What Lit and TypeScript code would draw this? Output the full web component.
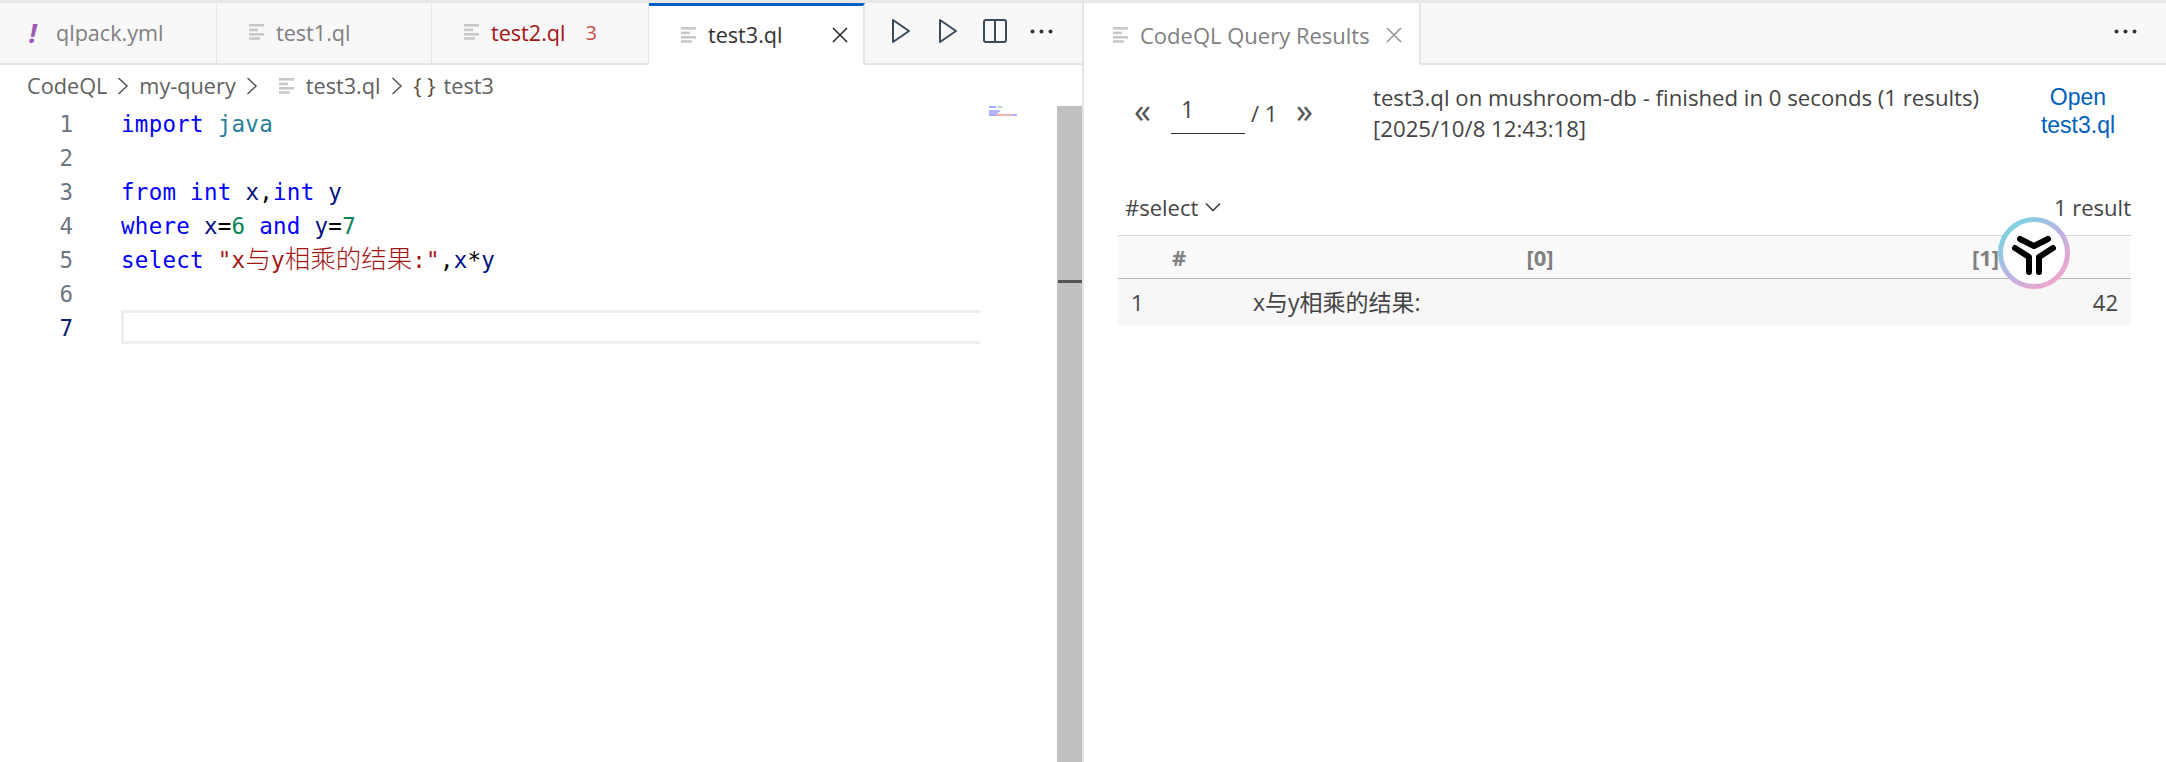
import { LitElement, html, css, svg } from "lit";
import { customElement } from "lit/decorators.js";

const docIcon = html`<svg class="doc" width="16" height="16" viewBox="0 0 16 16"><g fill="#c8c8c8"><rect x="0" y="0" width="15" height="2.6"/><rect x="0" y="4.6" width="9" height="2.6"/><rect x="0" y="9" width="15" height="2.6"/><rect x="0" y="13.2" width="11" height="2.6"/></g></svg>`;
const chev = html`<svg class="chev" width="12" height="20" viewBox="0 0 12 20"><path d="M1.5 2 L10 10 L1.5 18" fill="none" stroke="#555" stroke-width="1.5"/></svg>`;
const closeIcon = (c: string) => html`<svg width="16" height="16" viewBox="0 0 16 16"><path d="M1 1 L15 15 M15 1 L1 15" stroke="${c}" stroke-width="1.7" fill="none"/></svg>`;
const play = html`<svg width="20" height="26" viewBox="0 0 20 26"><path d="M2 2 V24 L18 13 Z" fill="none" stroke="#3b4a5a" stroke-width="2" stroke-linejoin="round"/></svg>`;
const dots = html`<svg width="23" height="5" viewBox="0 0 23 5"><g fill="#333"><circle cx="2.5" cy="2.5" r="2"/><circle cx="11.5" cy="2.5" r="2"/><circle cx="20.5" cy="2.5" r="2"/></g></svg>`;

@customElement("app-root")
export class AppRoot extends LitElement {
  static styles = css`
    :host { display: block; width: 2166px; height: 762px; position: relative; overflow: hidden; background: #fff;
      font-family: "Open Sans", "Noto Sans CJK SC", sans-serif; color: #444; font-size: 22px; }
    .app { display: flex; height: 762px; box-sizing: border-box; }
    .left { width: 1082px; display: flex; flex-direction: column; flex: none; }
    .divider { width: 2px; background: #e5e5e5; flex: none; }
    .right { flex: 1; display: flex; flex-direction: column; min-width: 0; }
    .tabs { height: 65px; box-sizing: border-box; display: flex; flex: none; background: #f8f8f8;
      border-top: 3px solid #e8e8e8; border-bottom: 2px solid #e5e5e5; font-size: 21.6px; }
    .tab { display: flex; align-items: center; flex: none; box-sizing: border-box; border-right: 1px solid #e5e5e5; color: #808080; height: 60px; padding-bottom: 2px; }
    .t1 { width: 217px; padding-left: 29px; }
    .t2 { width: 215px; padding-left: 32px; }
    .t3 { width: 217px; padding-left: 32px; }
    .t4 { width: 216px; padding-left: 32px; margin-bottom: -2px; height: 62px; background: #fff; border-top: 3px solid #0060c0; color: #333; border-right: 2px solid #e5e5e5; margin-top: 0; }
    .t5 { width: 337px; padding-left: 29px; background: #fff; height: 62px; color: #808080; border-right: 2px solid #e5e5e5; padding-top: 3px; font-size: 22px; }
    .doc { flex: none; margin-right: 11px; }
    .bang { color: #9b59b6; font-weight: 700; font-style: italic; font-size: 27px; width: 27px; flex: none; }
    .err { color: #a31515; }
    .count { color: #c74e4e; margin-left: 20px; font-size: 20px; }
    .x { margin-left: 49px; display: flex; }
    .t5 .x { margin-left: 16px; }
    .actions { display: flex; align-items: center; flex: 1; padding-left: 26px; padding-bottom: 4px; }
    .actions svg { flex: none; }
    .a2 { margin-left: 27px; }
    .a3 { margin-left: 25px; }
    .a4 { margin-left: 23px; }
    .rightfill { flex: 1; display: flex; align-items: center; justify-content: flex-end; padding: 0 29px 4px 0; }
    .crumbs { height: 41px; flex: none; display: flex; align-items: center; color: #616161; padding-left: 27px; box-sizing: border-box; font-size: 21.7px; }
    .chev { flex: none; margin: 0 10px 0 10px; }
    .crumbs .doc { margin: 0 11px 0 11px; }
    .crumbs .brace { color: #5a4a3a; margin-left: 1px; margin-right: 8px; }
    .editor { flex: 1; display: flex; min-height: 0; }
    .gutter { width: 121px; flex: none; box-sizing: border-box; padding-right: 48px; text-align: right; color: #6e7681; }
    .gutter div, .line { height: 34px; line-height: 36px; font-family: "DejaVu Sans Mono", monospace; font-size: 22.5px; }
    .gutter .cur { color: #0b216f; }
    .code { width: 859px; flex: none; }
    .line { white-space: pre; letter-spacing: 0.27px; }
    .curline { box-sizing: border-box; border: 3px solid #eeeeee; border-right: 0; }
    .k { color: #0000ff; } .ty { color: #267f99; } .v { color: #001080; } .n { color: #098658; } .p { color: #000; } .s { color: #a31515; }
    .cjk { font-family: "Noto Sans CJK SC", sans-serif; font-size: 25.5px; letter-spacing: 0; font-weight: 300; line-height: 0; }
    .minimap { flex: 1; padding: 0 0 0 9px; display: flex; flex-direction: column; }
    .mm { height: 2px; display: flex; }
    .mm i { display: block; height: 1.5px; }
    .scroll { width: 25px; background: #c0c0c0; flex: none; padding-top: 174px; box-sizing: border-box; }
    .scroll div { height: 3px; background: #555; margin-left: 1px; }
    .head { display: flex; height: 130px; flex: none; box-sizing: border-box; padding: 17px 0 0 0; }
    .pager { width: 289px; flex: none; display: flex; align-items: flex-start; padding-left: 50px; box-sizing: border-box; }
    .arrow { font-size: 34px; line-height: 40px; color: #555; width: 37px; margin-top: 8px; }
    .num { width: 74px; height: 52px; box-sizing: border-box; border-bottom: 1px solid #333; padding-left: 10px; line-height: 54px; color: #444; margin-right: 6px; font-size: 23px; }
    .of { line-height: 62px; width: 45px; }
    .msg { width: 590px; flex: none; line-height: 31px; white-space: nowrap; font-size: 22.2px; }
    .open { flex: none; width: 130px; text-align: center; color: #0060c0; font-family: "Liberation Sans", sans-serif; font-size: 23px; line-height: 28px; margin-left: 50px; padding-top: 1px; }
    .results { margin: 0 35px 0 34px; }
    .bar { display: flex; justify-content: space-between; align-items: center; height: 40px; padding-bottom: 16px; box-sizing: border-box; }
    .bar .sel { display: flex; align-items: center; gap: 7px; padding-left: 7px; }
    .grid { display: grid; grid-template-columns: 122px 600px 291px; }
    .hd { height: 44px; background: #fafafa; border-top: 1px solid #d8d8d8; border-bottom: 1px solid #b8b8b8; box-sizing: border-box; text-align: center; font-weight: 700; color: #808080; font-size: 22px; line-height: 42px; }
    .cell { height: 46px; background: #f7f7f7; line-height: 46px; padding: 0 13px; box-sizing: border-box; }
    .cell.r { text-align: right; }
    .zh { font-size: 23px; }
    .badge { position: absolute; left: 1997px; top: 216px; width: 74px; height: 74px; }
  `;

  render() {
    return html`
      <div class="app">
        <div class="left">
          <div class="tabs">
            <div class="tab t1"><span class="bang">!</span>qlpack.yml</div>
            <div class="tab t2">${docIcon}test1.ql</div>
            <div class="tab t3">${docIcon}<span class="err">test2.ql</span><span class="count">3</span></div>
            <div class="tab t4">${docIcon}test3.ql<span class="x">${closeIcon("#333")}</span></div>
            <div class="actions">
              ${play}<span class="a2"></span>${play}
              <svg class="a3" width="24" height="24" viewBox="0 0 24 24"><rect x="1" y="1" width="22" height="22" rx="2" fill="none" stroke="#3b4a5a" stroke-width="2"/><path d="M12 1 V23" stroke="#3b4a5a" stroke-width="2"/></svg>
              <span class="a4"></span>${dots}
            </div>
          </div>
          <div class="crumbs">CodeQL${chev}my-query${chev}${docIcon}test3.ql${chev}<span class="brace">{ }</span>test3</div>
          <div class="editor">
            <div class="gutter">
              <div>1</div><div>2</div><div>3</div><div>4</div><div>5</div><div>6</div><div class="cur">7</div>
            </div>
            <div class="code">
              <div class="line"><span class="k">import</span> <span class="ty">java</span></div>
              <div class="line"></div>
              <div class="line"><span class="k">from</span> <span class="k">int</span> <span class="v">x</span><span class="p">,</span><span class="k">int</span> <span class="v">y</span></div>
              <div class="line"><span class="k">where</span> <span class="v">x</span><span class="p">=</span><span class="n">6</span> <span class="k">and</span> <span class="v">y</span><span class="p">=</span><span class="n">7</span></div>
              <div class="line"><span class="k">select</span> <span class="s">"x<span class="cjk">与</span>y<span class="cjk">相乘的结果</span>:"</span><span class="p">,</span><span class="v">x</span><span class="p">*</span><span class="v">y</span></div>
              <div class="line"></div>
              <div class="line curline"></div>
            </div>
            <div class="minimap">
              <div class="mm"><i style="width:7px;background:#a8a8ff"></i><i style="width:2px"></i><i style="width:4px;background:#a6d4de"></i></div>
              <div class="mm"></div>
              <div class="mm"><i style="width:11px;background:#b4b4f6"></i></div>
              <div class="mm"><i style="width:9px;background:#b4b4f6"></i></div>
              <div class="mm"><i style="width:7px;background:#a8a8ff"></i><i style="width:15px;background:#f6b4b4"></i><i style="width:6px;background:#b4b4f6"></i></div>
            </div>
            <div class="scroll"><div></div></div>
          </div>
        </div>
        <div class="divider"></div>
        <div class="right">
          <div class="tabs">
            <div class="tab t5">${docIcon}CodeQL Query Results<span class="x">${closeIcon("#999")}</span></div>
            <div class="rightfill">${dots}</div>
          </div>
          <div class="head">
            <div class="pager"><span class="arrow">«</span><span class="num">1</span><span class="of">/ 1</span><span class="arrow">»</span></div>
            <div class="msg">test3.ql on mushroom-db - finished in 0 seconds (1 results)<br>[2025/10/8 12:43:18]</div>
            <div class="open">Open<br>test3.ql</div>
          </div>
          <div class="results">
            <div class="bar"><span class="sel">#select <svg width="16" height="10" viewBox="0 0 16 10"><path d="M1 1.5 L8 8.5 L15 1.5" fill="none" stroke="#444" stroke-width="1.7"/></svg></span><span>1 result</span></div>
            <div class="grid">
              <div class="hd">#</div><div class="hd">[0]</div><div class="hd">[1]</div>
              <div class="cell">1</div><div class="cell zh">x与y相乘的结果:</div><div class="cell r">42</div>
            </div>
          </div>
        </div>
      </div>
      <svg class="badge" viewBox="0 0 74 74">
        <defs><linearGradient id="g" x1="0.15" y1="0.1" x2="0.85" y2="0.9"><stop offset="0" stop-color="#7ed2e0"/><stop offset="0.5" stop-color="#b9b4e2"/><stop offset="1" stop-color="#f0a6cc"/></linearGradient></defs>
        <circle cx="37" cy="37" r="33.5" fill="#fff" stroke="url(#g)" stroke-width="5"/>
        ${svg`<g transform="translate(37 37)" fill="none" stroke="#000" stroke-width="6" stroke-linecap="round" stroke-linejoin="round">
          <path d="M-14 -14 L0 -7 L14 -14"/>
          <path d="M-19 -5 L-5 4 L-5 19"/>
          <path d="M19 -5 L5 4 L5 19"/>
        </g>`}
      </svg>
    `;
  }
}
